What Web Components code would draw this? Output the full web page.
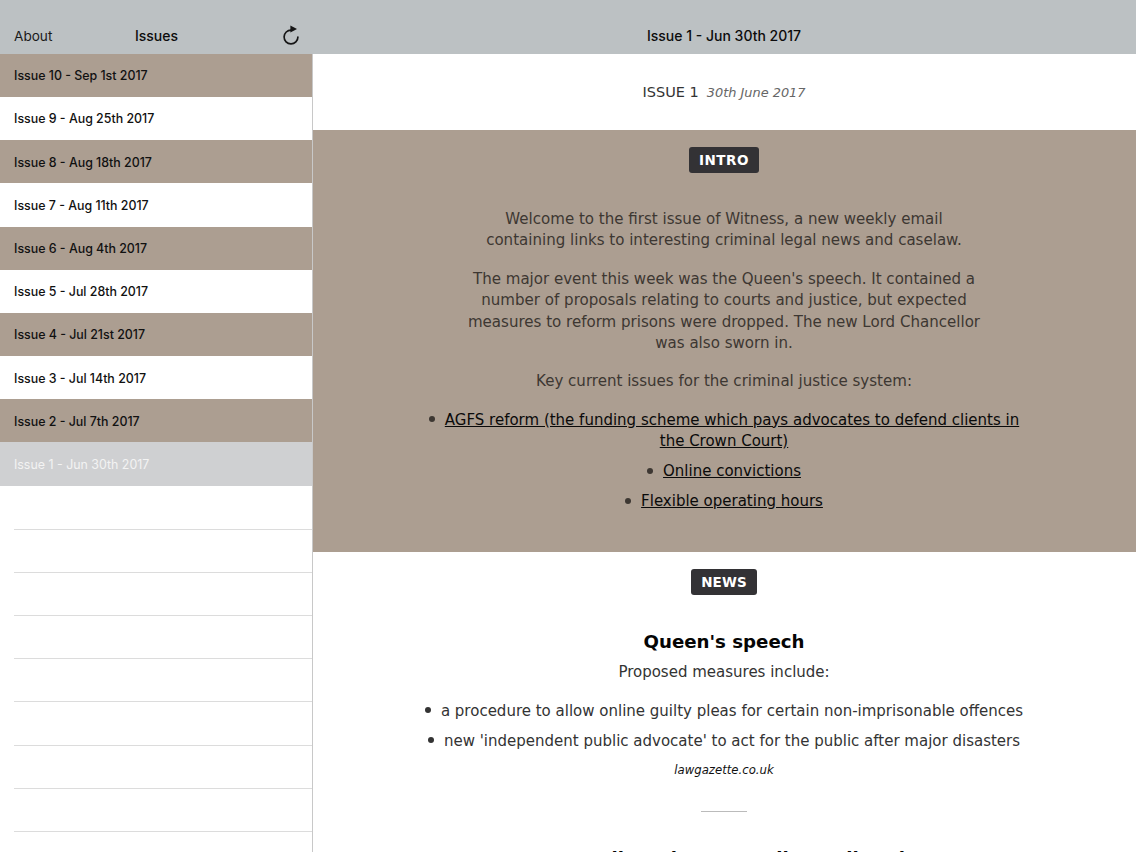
<!DOCTYPE html>
<html><head><meta charset="utf-8">
<style>
html,body{margin:0;padding:0;height:852px;overflow:hidden;background:#fff}
content-section p{margin:0 0 16.7px}
content-section ul{margin:0 0 17px;padding:0;list-style:none;font-size:15px}
content-section li{margin:0 0 8.5px}
content-section li::before{content:"";display:inline-block;width:6px;height:6px;border-radius:50%;background:currentColor;margin-right:10px;vertical-align:2.5px}
content-section a{color:#0a0a0a;text-decoration:underline}
content-section h3{margin:0 0 8.5px;font:700 18.2px/24px "DejaVu Sans",sans-serif;color:#050505}
content-section p.lead{margin-bottom:17px;font-size:15px}
content-section ul.dark{margin-bottom:3.2px}
content-section cite{display:block;font:italic 11.7px/18px "DejaVu Sans",sans-serif;color:#111}
content-section hr{width:46px;height:1px;border:0;background:#bbb;margin:32px auto 34.6px}
</style></head><body>
<app-shell>
  <issue-sidebar slot="side">
    <issue-row tone="tan">Issue 10 - Sep 1st 2017</issue-row>
    <issue-row tone="white">Issue 9 - Aug 25th 2017</issue-row>
    <issue-row tone="tan">Issue 8 - Aug 18th 2017</issue-row>
    <issue-row tone="white">Issue 7 - Aug 11th 2017</issue-row>
    <issue-row tone="tan">Issue 6 - Aug 4th 2017</issue-row>
    <issue-row tone="white">Issue 5 - Jul 28th 2017</issue-row>
    <issue-row tone="tan">Issue 4 - Jul 21st 2017</issue-row>
    <issue-row tone="white">Issue 3 - Jul 14th 2017</issue-row>
    <issue-row tone="tan">Issue 2 - Jul 7th 2017</issue-row>
    <issue-row tone="sel">Issue 1 - Jun 30th 2017</issue-row>
    <issue-row tone="blank"></issue-row>
    <issue-row tone="empty"></issue-row>
    <issue-row tone="empty"></issue-row>
    <issue-row tone="empty"></issue-row>
    <issue-row tone="empty"></issue-row>
    <issue-row tone="empty"></issue-row>
    <issue-row tone="empty"></issue-row>
    <issue-row tone="empty"></issue-row>
    <issue-row tone="empty"></issue-row>
  </issue-sidebar>
  <issue-detail slot="main" heading="Issue 1 - Jun 30th 2017">
    <issue-title num="ISSUE 1" date="30th June 2017"></issue-title>
    <content-section tone="tan" label="INTRO">
      <p>Welcome to the first issue of Witness, a new weekly email<br>containing links to interesting criminal legal news and caselaw.</p>
      <p>The major event this week was the Queen's speech. It contained a<br>number of proposals relating to courts and justice, but expected<br>measures to reform prisons were dropped. The new Lord Chancellor<br>was also sworn in.</p>
      <p>Key current issues for the criminal justice system:</p>
      <ul>
        <li><a>AGFS reform (the funding scheme which pays advocates to defend clients in<br>the Crown Court)</a></li>
        <li><a>Online convictions</a></li>
        <li><a>Flexible operating hours</a></li>
      </ul>
    </content-section>
    <content-section tone="white" label="NEWS">
      <h3>Queen's speech</h3>
      <p class="lead">Proposed measures include:</p>
      <ul class="dark">
        <li>a procedure to allow online guilty pleas for certain non-imprisonable offences</li>
        <li>new 'independent public advocate' to act for the public after major disasters</li>
      </ul>
      <cite>lawgazette.co.uk</cite>
      <hr>
      <h3>Bar Council on the new online guilty pleas</h3>
    </content-section>
  </issue-detail>
</app-shell>
<script>
const SANS='Inter,"Liberation Sans",sans-serif';
const VERD='"DejaVu Sans",sans-serif';
function def(name,html,extra){
  customElements.define(name,class extends HTMLElement{
    constructor(){super();this.attachShadow({mode:'open'}).innerHTML=html;}
    connectedCallback(){extra&&extra(this);}
  });
}
def('app-shell',`<style>
:host{display:grid;grid-template-columns:312px 1fr;width:1136px;height:852px;overflow:hidden}
</style><slot name="side"></slot><slot name="main"></slot>`);

def('nav-bar',`<style>
:host{display:grid;flex:none;grid-template-columns:1fr auto 1fr;align-items:center;height:53.8px;box-sizing:border-box;padding:18px 14px 0;background:#bcc1c3;color:#1a1a1a;font:14px/20px ${SANS}}
.r{justify-self:end;display:flex}
.l{justify-self:start;font-size:13.6px}
.c{font-weight:500;color:#0c0c0c}
</style><div class="l"><slot name="left"></slot></div><div class="c"><slot></slot></div><div class="r"><slot name="right"></slot></div>`);

def('refresh-icon',`<style>:host{display:block;width:22px;height:22px}svg{display:block}</style>
<svg width="22" height="22" viewBox="0 0 22 22"><path d="M11.2 5.1A6.9 6.9 0 1 0 17.9 12" fill="none" stroke="#161616" stroke-width="1.7" stroke-linecap="round"/><path d="M10.4 .4L17 3.9L10.4 7.4Z" fill="#161616"/></svg>`);

def('issue-sidebar',`<style>
:host{display:flex;flex-direction:column;height:852px;overflow:hidden;width:313px;position:relative;z-index:1}
.list{flex:1;display:flex;flex-direction:column;border-right:1px solid #c8c8c8;overflow:hidden;background:#fff}
</style><nav-bar><span slot="left">About</span>Issues<refresh-icon slot="right" style="margin-right:-3px"></refresh-icon></nav-bar><div class="list"><slot></slot></div>`);

def('issue-row',`<style>
:host{display:flex;flex:none;height:43.2px;box-sizing:border-box;padding-left:14px;font:500 12.4px/18px ${SANS};color:#111}
:host([tone=tan]){background:#ac9e91}
:host([tone=white]){background:#fff}
:host([tone=sel]){background:#cfd0d2;color:#f3f3f3;font-weight:400}
:host([tone=blank]),:host([tone=empty]){background:#fff;height:43.15px}
.t{flex:1;display:flex;align-items:center;padding-top:1.6px;box-sizing:border-box}
:host([tone=empty]) .t{border-top:1px solid #dcdcdc}
</style><div class="t"><slot></slot></div>`);

def('issue-detail',`<style>
:host{display:flex;flex-direction:column;height:852px;overflow:hidden;background:#fff}
</style><nav-bar id="b"></nav-bar><slot></slot>`,el=>{el.shadowRoot.getElementById('b').textContent=el.getAttribute('heading');});

def('issue-title',`<style>
:host{display:flex;flex:none;justify-content:center;align-items:baseline;gap:8px;height:76.2px;box-sizing:border-box;padding-top:29px;font:14.5px/18px ${VERD};color:#333}
i{color:#666;font-size:12.9px}
</style><span id="n"></span><i id="d"></i>`,el=>{
  el.shadowRoot.getElementById('n').textContent=el.getAttribute('num');
  el.shadowRoot.getElementById('d').textContent=el.getAttribute('date');
});

def('tag-badge',`<style>
:host{display:inline-block;background:#333235;color:#fff;font:700 13.5px/16px ${VERD};letter-spacing:.1px;padding:5px 10px;border-radius:3px}
</style><slot></slot>`);

def('content-section',`<style>
:host{display:block;flex:none;box-sizing:border-box;text-align:center;font:15.05px/21.5px ${VERD};padding-top:17px}
:host([tone=tan]){background:#ac9e91;color:#3d3732;height:422px}
:host([tone=white]){background:#fff;color:#333}
.badge{display:flex;justify-content:center;margin-bottom:36px}
:host([tone=white]) .badge{margin-bottom:35px}
:host([tone=tan]) tag-badge{letter-spacing:.5px}
</style><div class="badge"><tag-badge id="b"></tag-badge></div><slot></slot>`,el=>{
  el.shadowRoot.getElementById('b').textContent=el.getAttribute('label');
});
</script>
</body></html>
